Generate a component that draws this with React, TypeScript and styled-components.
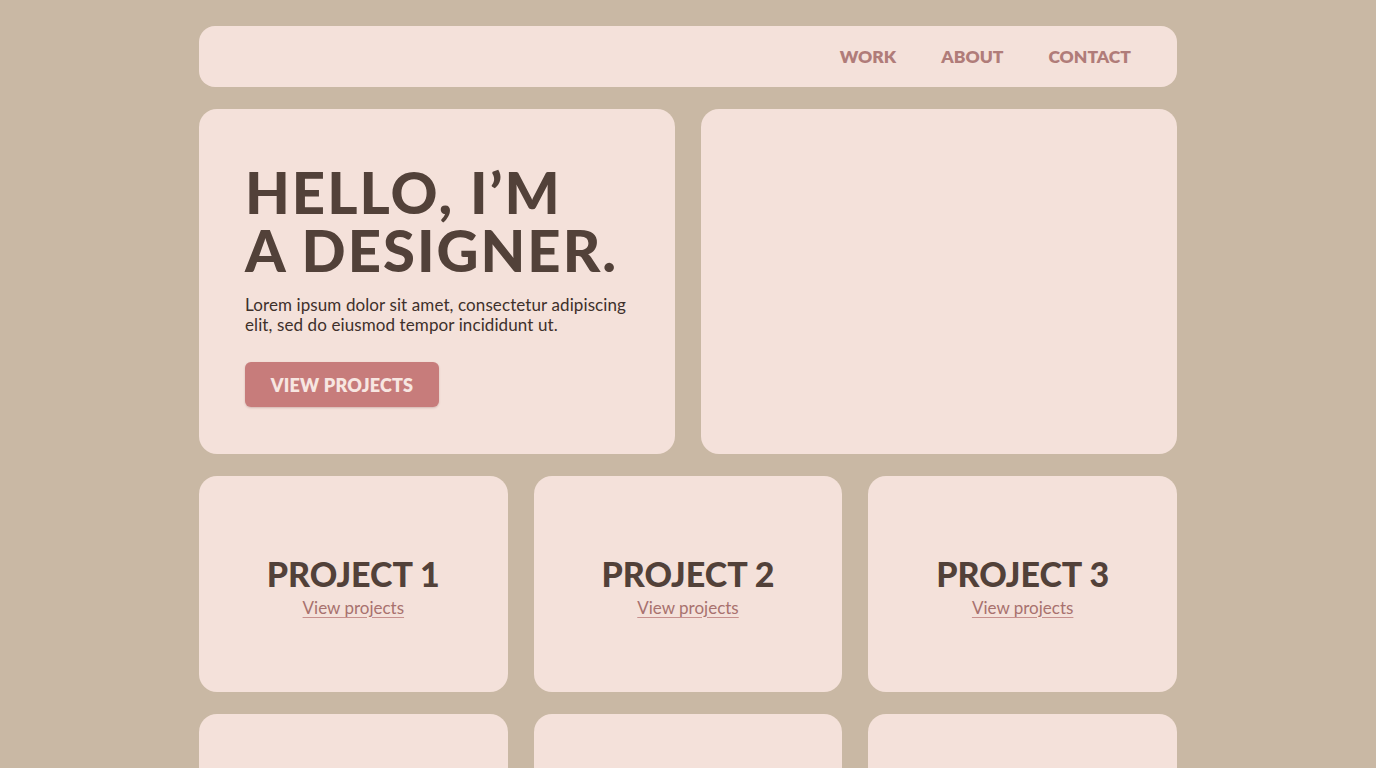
import React from "react";
import styled, { createGlobalStyle } from "styled-components";

const Global = createGlobalStyle`
  html, body { margin: 0; padding: 0; background: #c9b8a4; }
  body { font-family: Lato, "Open Sans", "Liberation Sans", sans-serif; overflow: hidden; }
  * { box-sizing: border-box; }
`;

const Page = styled.div`
  width: 978px;
  margin: 26px auto 0;
  display: flex;
  flex-direction: column;
  gap: 22px;
  height: 742px;
  overflow: hidden;
  & > * { flex-shrink: 0; }
`;

const Card = styled.div`
  background: #f4e1da;
  border-radius: 18px;
`;

const Nav = styled(Card)`
  height: 61px;
  display: flex;
  align-items: center;
  justify-content: flex-end;
  gap: 45px;
  padding-right: 46px;
  border-radius: 16px;
`;

const NavLink = styled.a`
  font-weight: 800;
  font-size: 17.5px;
  color: #b07c79;
  text-decoration: none;
`;

const HeroRow = styled.div`
  display: grid;
  grid-template-columns: 1fr 1fr;
  gap: 26px;
  height: 345px;
`;

const HeroCard = styled(Card)`
  padding: 54px 46px 0 46px;
`;

const Heading = styled.h1`
  margin: 0;
  font-size: 58px;
  line-height: 58px;
  font-weight: 900;
  color: #524139;
  letter-spacing: 2px;
`;

const Lead = styled.p`
  margin: 16px 0 0;
  font-size: 17px;
  line-height: 20px;
  color: #3e302b;
  letter-spacing: 0.1px;
`;

const Button = styled.button`
  margin-top: 27px;
  width: 194px;
  height: 45px;
  border: none;
  border-radius: 6px;
  background: #c77c7b;
  color: #f7e6e1;
  font-family: inherit;
  font-weight: 800;
  font-size: 18px;
  letter-spacing: 0.2px;
  box-shadow: 0 1px 2px rgba(120, 60, 60, 0.25);
`;

const ProjectRow = styled.div`
  display: grid;
  grid-template-columns: repeat(3, 1fr);
  gap: 26px;
`;

const ProjectCard = styled(Card)<{ $h: number }>`
  height: ${(p) => p.$h}px;
  display: flex;
  flex-direction: column;
  align-items: center;
  justify-content: center;
  padding-top: 4px;
`;

const ProjectTitle = styled.h2`
  margin: 0;
  font-size: 34px;
  line-height: 38px;
  font-weight: 900;
  color: #524139;
`;

const ProjectLink = styled.a`
  margin-top: 4px;
  font-size: 17px;
  color: #a8716e;
  text-decoration: underline;
  text-decoration-color: #c7918e;
  text-underline-offset: 3px;
`;

export default function App() {
  return (
    <>
      <Global />
      <Page>
        <Nav>
          <NavLink>WORK</NavLink>
          <NavLink>ABOUT</NavLink>
          <NavLink>CONTACT</NavLink>
        </Nav>
        <HeroRow>
          <HeroCard>
            <Heading>
              HELLO, I’M
              <br />A DESIGNER.
            </Heading>
            <Lead>
              Lorem ipsum dolor sit amet, consectetur adipiscing
              <br />
              elit, sed do eiusmod tempor incididunt ut.
            </Lead>
            <Button>VIEW PROJECTS</Button>
          </HeroCard>
          <Card />
        </HeroRow>
        <ProjectRow>
          {[1, 2, 3].map((n) => (
            <ProjectCard key={n} $h={216}>
              <ProjectTitle>PROJECT {n}</ProjectTitle>
              <ProjectLink>View projects</ProjectLink>
            </ProjectCard>
          ))}
        </ProjectRow>
        <ProjectRow>
          {[4, 5, 6].map((n) => (
            <ProjectCard key={n} $h={120} />
          ))}
        </ProjectRow>
      </Page>
    </>
  );
}
